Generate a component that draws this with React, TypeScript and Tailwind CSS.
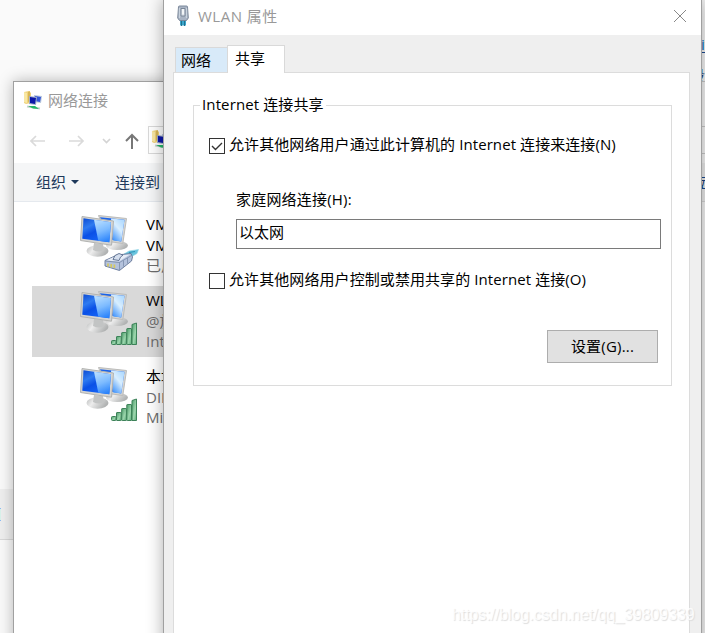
import type { ReactNode } from "react"

const uiFont = "font-['Open_Sans','Noto_Sans_CJK_SC',sans-serif]"

function FolderNetworkIcon() {
  return (
    <svg width="20" height="20" viewBox="0 0 20 20" className="shrink-0">
      <path d="M1 1l5-1 2 2v10l-5 1-2-1z" fill="#efd27a" />
      <path d="M1 1l3 1v10l-3-1z" fill="#f8e7a4" />
      <path d="M5 1l2-1v10l-2 1z" fill="#d7b658" />
      <path d="M11 4l8 1-1 7-7-1z" fill="#b9c7dc" />
      <path d="M12 5l6 1-1 5-5-1z" fill="#3356d8" />
      <path d="M6 5l8 1-1 8-7-1z" fill="#9eabc9" />
      <path d="M7 6l6 1-1 6-5-1z" fill="#0c17a8" />
      <path d="M4 15.500l13 2" stroke="#c7d2cf" strokeWidth="2" />
      <path d="M5 15l7 0 4 3-6-.5z" fill="#25b768" />
    </svg>
  )
}

function AdapterPlugIcon() {
  return (
    <svg width="14" height="22" viewBox="0 0 14 22" className="shrink-0">
      <path d="M4 15h6v5.500H4z" fill="#3aa6cc" />
      <path d="M5.500 16v5M8.500 16v5" stroke="#21718f" />
      <path d="M2.500 2q0-1 1-1h7q1 0 1 1l.8 11-1.800 2.500h-7L1.700 13z" fill="#a9b4c4" stroke="#7b889a" />
      <path d="M3.500 3v10M10.500 3v10" stroke="#c9d3de" strokeWidth="1.200" />
      <path d="M5 3.500h4v7.500H5z" fill="#dfe5ec" stroke="#7a8798" />
      <path d="M7 4v5" stroke="#fff" strokeWidth="1.200" />
    </svg>
  )
}

function SignalBars() {
  return (
    <g fill="url(#bar)" stroke="#3d8259" strokeWidth="1">
      <rect x="31.500" y="50.500" width="4.500" height="4" rx="1" />
      <rect x="36.500" y="46.500" width="4.700" height="8" rx=".5" />
      <rect x="41.700" y="42.500" width="4.700" height="12" rx=".5" />
      <rect x="46.800" y="38.500" width="4.700" height="16" rx=".5" />
      <path d="M52 34.500l4.500-1.500v21.500H52z" />
    </g>
  )
}

function CablePlug() {
  return (
    <g strokeLinejoin="round">
      <path d="M44 40l5-3 9.500-1.500-1.500 4-7 4z" fill="#69c4de" stroke="#8fd3e4" strokeWidth=".6" />
      <path d="M49 38.500l6-1" stroke="#2e94b8" strokeWidth="1.200" />
      <path d="M25 46.500L37 41l14-1.500 1.500 3.500-1 4L39.500 56.500 25 52z" fill="#b4c2dc" stroke="#647696" strokeWidth=".9" />
      <path d="M26 46.500L37 41.500l13-1-11 7z" fill="#e6ecf6" />
      <path d="M39.500 48.500l12-7" stroke="#7a8baa" strokeWidth=".8" />
      <path d="M39.500 48.500v7.500M43.500 46.500v6M47.500 44v5.500" stroke="#7a8baa" strokeWidth=".8" />
      <path d="M25.500 47l14 1.500" stroke="#74849f" strokeWidth=".8" />
      <path d="M33 45.500q1-5 6-6l4 1.500q-3 1.500-4 5.500z" fill="#d4deee" stroke="#596c8c" strokeWidth=".9" />
      <path d="M28 49.500v3M31.200 50v3.500M34.400 50.500V54" stroke="#d6c95e" strokeWidth="1.700" />
    </g>
  )
}

function ComputersIcon({ wired }: { wired?: boolean }) {
  return (
    <svg width="60" height="58" viewBox="0 0 60 58" className="shrink-0">
      <defs>
        <linearGradient id="front" x1="0" y1="0" x2=".6" y2="1">
          <stop offset="0" stopColor="#0b49d2" />
          <stop offset=".35" stopColor="#2f7bf0" />
          <stop offset=".6" stopColor="#0a50e6" />
          <stop offset="1" stopColor="#1668fa" />
        </linearGradient>
        <linearGradient id="glare" x1=".3" y1="0" x2=".6" y2="1">
          <stop offset="0" stopColor="#b5dcff" />
          <stop offset=".5" stopColor="#7dbbff" />
          <stop offset="1" stopColor="#2a83fb" />
        </linearGradient>
        <linearGradient id="rear" x1="1" y1="0" x2=".3" y2="1">
          <stop offset="0" stopColor="#a5d5ff" />
          <stop offset=".5" stopColor="#d8eeff" />
          <stop offset="1" stopColor="#4898fb" />
        </linearGradient>
        <linearGradient id="stand" x1="0" y1="0" x2="1" y2=".4">
          <stop offset="0" stopColor="#b9bbbb" />
          <stop offset=".4" stopColor="#ededed" />
          <stop offset="1" stopColor="#b0b2b2" />
        </linearGradient>
        <linearGradient id="bar" x1="0" y1="0" x2="1" y2="1">
          <stop offset="0" stopColor="#4d9d6b" />
          <stop offset=".6" stopColor="#9cd6ad" />
          <stop offset="1" stopColor="#5bab79" />
        </linearGradient>
      </defs>
      <ellipse cx="37" cy="31.500" rx="11" ry="4.500" fill="url(#stand)" />
      <path d="M18.500 1.500l28 3-3.700 25-14-2z" fill="#d5d5d3" stroke="#bcbcba" />
      <path d="M20 3.200l24.500 2.600-3.300 21.700-10-2z" fill="#1a63ea" />
      <path d="M31 4.500l13.500 1.300-3.300 21.700-8-1z" fill="url(#rear)" />
      <ellipse cx="17.500" cy="37" rx="11" ry="5.800" fill="url(#stand)" />
      <path d="M14 29l9 1 1 6q-5 3-11 0z" fill="#c2c4c4" />
      <path d="M2 2.500L33.500 7l-2 24.200L.5 26.500z" fill="#d4d4d2" stroke="#b3b4b2" strokeLinejoin="round" />
      <path d="M3.500 4.200L31 8.300l-1.700 20L2.300 24.700z" fill="url(#front)" />
      <path d="M14 5.800L31 8.300l-1.700 20-11-1.500z" fill="url(#glare)" />
      {wired ? <CablePlug /> : <SignalBars />}
    </svg>
  )
}

function Connection({
  selected,
  wired,
  children,
}: {
  selected?: boolean
  wired?: boolean
  children: ReactNode
}) {
  return (
    <div
      className={`ml-[18px] flex h-[71px] pl-12 pt-1 mb-[5px] whitespace-nowrap ${
        selected ? "bg-[#d9d9d9]" : ""
      }`}
    >
      <ComputersIcon wired={wired} />
      <div className="ml-1.5 text-[15px] leading-[20.500px] text-[#6d6d6d]">{children}</div>
    </div>
  )
}

/* Explorer window listing the adapters, partly covered by the dialog */
function ConnectionsWindow() {
  return (
    <div className="absolute left-[13px] top-[81px] h-[570px] w-[400px] border border-[#a0a0a0] bg-white shadow-[0_0_14px_rgba(0,0,0,0.28)]">
      <div className="flex h-[37px] items-center gap-[5px] pl-[9px] text-[15px] text-[#999]">
        <FolderNetworkIcon />
        网络连接
      </div>

      <div className="flex h-11 items-center pl-4">
        <svg width="110" height="22" viewBox="0 0 110 22" fill="none" className="shrink-0">
          <path d="M15 11H1M6 6l-5 5 5 5" stroke="#dadada" strokeWidth="1.700" />
          <path d="M39 11h14M48 6l5 5-5 5" stroke="#dadada" strokeWidth="1.700" />
          <path d="M73 9l3.500 3.500L80 9" stroke="#d4d4d4" strokeWidth="1.700" />
          <path d="M102 19V5M96 11l6-6 6 6" stroke="#777" strokeWidth="2" />
        </svg>
        <div className="ml-2 mt-[-2px] flex h-7 w-52 items-center border border-[#d9d9d9] pl-0.5">
          <FolderNetworkIcon />
        </div>
      </div>

      <div className="flex h-[39px] items-center border-b border-[#e5e9ee] bg-[#f5f6f7] pl-[22px] text-[15px] text-[#1e395b]">
        组织
        <svg width="8" height="4" viewBox="0 0 8 4" className="ml-[5px]">
          <path d="M0 0h8L4 4z" fill="#1e395b" />
        </svg>
        <span className="ml-9">连接到</span>
      </div>

      <div className="pt-2">
        <Connection wired>
          <p className="text-black">VMware</p>
          <p className="text-black">VMnet1</p>
          <p>已启用</p>
        </Connection>
        <Connection selected>
          <p className="text-black">WLAN</p>
          <p>@放</p>
          <p>Intel(R)</p>
        </Connection>
        <Connection>
          <p className="text-black">本地连接</p>
          <p>DIRECT</p>
          <p>Microsoft</p>
        </Connection>
      </div>
    </div>
  )
}

function CheckRow({ checked, label }: { checked?: boolean; label: string }) {
  return (
    <div className="flex h-5 items-center gap-1 whitespace-nowrap">
      <span className="mt-0.5 flex size-4 shrink-0 items-center justify-center border border-[#333] bg-white">
        {checked && (
          <svg width="14" height="14" viewBox="0 0 14 14" fill="none" className="shrink-0">
            <path d="M2 7l3.500 3.500L12 4" stroke="#333" strokeWidth="1.400" />
          </svg>
        )}
      </span>
      <span className="mt-[-2px] tracking-[0.080px]">{label}</span>
    </div>
  )
}

function PropertiesDialog() {
  return (
    <div className="absolute left-[163px] top-[-1px] flex h-[660px] w-[539px] flex-col border border-[#a0a0a0] bg-[#efefef] text-[15px] text-black shadow-[0_0_16px_rgba(0,0,0,0.32)]">
      <div className="flex h-[35px] shrink-0 items-center bg-white pl-3 pr-3.5 text-[#999]">
        <div className="mt-[-3px]">
          <AdapterPlugIcon />
        </div>
        <span className="ml-2 mt-[-2px] tracking-[0.500px]">WLAN 属性</span>
        <svg width="14" height="14" viewBox="0 0 14 14" className="ml-auto mt-[-3px]">
          <path d="M1 1l12 12M13 1L1 13" stroke="#888" />
        </svg>
      </div>

      <div className="mt-2.5 flex h-[27px] shrink-0 items-end pl-[11px]">
        <div className="flex h-[25px] w-[52px] items-center border border-b-0 border-r-0 border-[#d9d9d9] bg-[#d8eaf9] pl-[5px]">
          网络
        </div>
        <div className="relative z-10 mb-[-1px] flex h-7 w-[58px] items-center border border-b-0 border-[#d9d9d9] bg-white pb-0.5 pl-[7px]">
          共享
        </div>
      </div>

      <div className="ml-[9px] mr-[11px] grow border border-[#dcdcdc] bg-white pl-[19px] pt-[21px]">
        <fieldset className="h-[292px] w-[479px] border border-[#dcdcdc] pl-[15px]">
          <legend className="ml-[-9px] h-[22px] px-0.5 leading-5 tracking-[0.120px]">Internet 连接共享</legend>
          <div className="mt-[19px]">
            <CheckRow checked label="允许其他网络用户通过此计算机的 Internet 连接来连接(N)" />
          </div>
          <div className="ml-[27px] mt-[34px] h-5 leading-5 tracking-[0.200px]">家庭网络连接(H):</div>
          <div className="ml-[27px] mt-2.5 flex h-[30px] w-[425px] items-center border border-[#7a7a7a] pb-1 pl-0.5">
            以太网
          </div>
          <div className="mt-[21px]">
            <CheckRow label="允许其他网络用户控制或禁用共享的 Internet 连接(O)" />
          </div>
          <button className="ml-[338px] mt-10 flex h-[33px] w-[111px] items-center justify-center border border-[#adadad] bg-[#e1e1e1] tracking-[0.200px]">
            设置(G)...
          </button>
        </fieldset>
      </div>
    </div>
  )
}

/* Page behind both windows, only its edges are visible */
function BackgroundPage() {
  return (
    <div className="flex h-full justify-between text-[15px] leading-5">
      <div className="w-40 pt-[489px]">
        <div className="h-[51px] border-b border-[#d9d9d9] bg-[#efefef] pt-[19px]">
          <div className="h-[13px] w-px border-y border-[#8ebdf5] bg-[#daf3ec]" />
        </div>
      </div>
      <div className="w-1.5 overflow-hidden whitespace-nowrap bg-[#f4f4f4] pt-9 text-[#1b3f78]">
        <p className="ml-0.5 h-[17px] border-b border-[#1b4b91] leading-[17px] text-[#0067b8]">it</p>
        <p className="ml-[-9px] mt-3 h-4 overflow-hidden">段</p>
        <div className="h-[46px] border-b border-t border-[#c8c8c8]" />
        <div className="h-[27px] border-b border-[#c8c8c8]" />
        <div className="mt-[9px] h-[39px] border-b border-[#d5d5d5] bg-[#eaeaea] pt-3.5">
          <p className="ml-[-8px] h-3 overflow-hidden border-y border-[#1b4b91] leading-3">数</p>
        </div>
      </div>
    </div>
  )
}

export default function App() {
  return (
    <div className={`relative h-[633px] w-[705px] overflow-hidden bg-[#fafafa] ${uiFont}`}>
      <BackgroundPage />
      <ConnectionsWindow />
      <PropertiesDialog />
      {/* Watermark */}
      <p className="absolute left-[452px] top-[603px] font-['Liberation_Sans',sans-serif] text-base tracking-[-0.090px] text-white/80 [text-shadow:1px_1px_1px_#ddd]">
        https://blog.csdn.net/qq_39809339
      </p>
    </div>
  )
}
